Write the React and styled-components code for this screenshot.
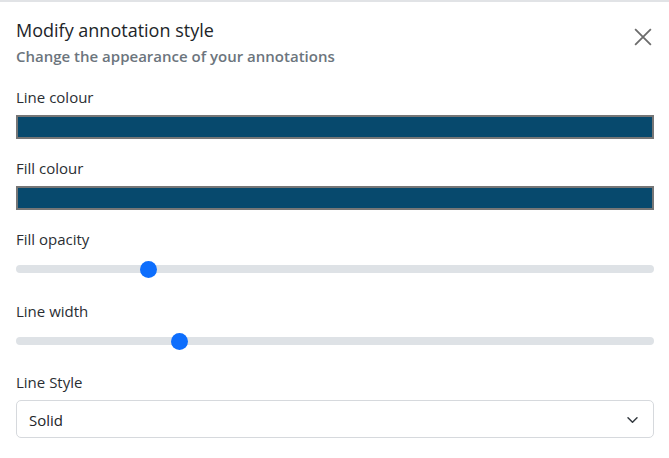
import styled, { createGlobalStyle } from 'styled-components';

const GlobalStyle = createGlobalStyle`
  html, body {
    margin: 0;
    padding: 0;
    background: #fff;
  }
  body {
    font-family: "Open Sans", "Noto Sans", "Liberation Sans", sans-serif;
    color: #212529;
  }
`;

const Modal = styled.div`
  width: 669px;
  height: 458px;
  box-sizing: border-box;
  border-top: 2px solid #e1e3e6;
  background: #fff;
`;

const Header = styled.div`
  display: flex;
  justify-content: space-between;
  align-items: flex-start;
  padding: 13px 16px 0 16px;
`;

const Title = styled.h5`
  margin: 0;
  font-size: 18px;
  font-weight: 500;
  line-height: 31px;
  color: #212529;
`;

const Subtitle = styled.div`
  font-size: 15px;
  font-weight: 600;
  line-height: 20px;
  color: #6c757d;
`;

const CloseButton = styled.button`
  border: none;
  background: transparent;
  padding: 0;
  margin-top: 12px;
  width: 20px;
  height: 20px;
  display: flex;
  align-items: center;
  justify-content: center;
  cursor: pointer;
`;

const Body = styled.div`
  padding: 19px 15px 0 16px;
`;

const Group = styled.div`
  margin-bottom: ${p => p.$gap || 17}px;
`;

const Label = styled.label`
  display: block;
  font-size: 15px;
  line-height: 24px;
  margin-bottom: 6px;
  color: #2a2e33;
`;

const ColorSwatch = styled.div`
  height: 24px;
  box-sizing: border-box;
  border: 2px solid #767676;
  background: ${p => p.$color};
`;

const Range = styled.input.attrs({ type: 'range' })`
  display: block;
  width: 100%;
  height: 24px;
  margin: 0;
  padding: 0;
  background: transparent;
  -webkit-appearance: none;
  appearance: none;

  &::-webkit-slider-runnable-track {
    height: 8px;
    border-radius: 16px;
    background: #dee2e6;
  }

  &::-webkit-slider-thumb {
    -webkit-appearance: none;
    appearance: none;
    width: 17px;
    height: 17px;
    margin-top: -4.5px;
    border-radius: 50%;
    border: 0;
    background: #0d6efd;
  }
`;

const SelectBox = styled.div`
  display: flex;
  align-items: center;
  justify-content: space-between;
  height: 38px;
  box-sizing: border-box;
  margin-top: 5px;
  border: 1px solid #d6d9dd;
  border-radius: 5px;
  padding: 2px 13px 0 12px;
  font-size: 15px;
  color: #212529;
`;

const Chevron = () => (
  <svg width="15" height="12" viewBox="0 0 16 16">
    <path d="m2 5 6 6 6-6" fill="none" stroke="#343a40" strokeWidth="2" strokeLinecap="round" strokeLinejoin="round" />
  </svg>
);

const CloseIcon = () => (
  <svg width="18" height="18" viewBox="0 0 16 16">
    <path d="M1 1 15 15M15 1 1 15" stroke="#6c6c6c" strokeWidth="1.6" />
  </svg>
);

const App = () => {
  return (
    <>
      <GlobalStyle />
      <Modal>
        <Header>
          <div>
            <Title>Modify annotation style</Title>
            <Subtitle>Change the appearance of your annotations</Subtitle>
          </div>
          <CloseButton aria-label="Close">
            <CloseIcon />
          </CloseButton>
        </Header>
        <Body>
          <Group>
            <Label>Line colour</Label>
            <ColorSwatch $color="#07496d" />
          </Group>
          <Group>
            <Label>Fill colour</Label>
            <ColorSwatch $color="#07496d" />
          </Group>
          <Group $gap={18}>
            <Label>Fill opacity</Label>
            <Range min="0" max="1" step="0.05" defaultValue="0.2" />
          </Group>
          <Group $gap={17}>
            <Label>Line width</Label>
            <Range min="1" max="9" step="1" defaultValue="3" />
          </Group>
          <Group>
            <Label>Line Style</Label>
            <SelectBox>
              <span>Solid</span>
              <Chevron />
            </SelectBox>
          </Group>
        </Body>
      </Modal>
    </>
  );
};

export default App;
